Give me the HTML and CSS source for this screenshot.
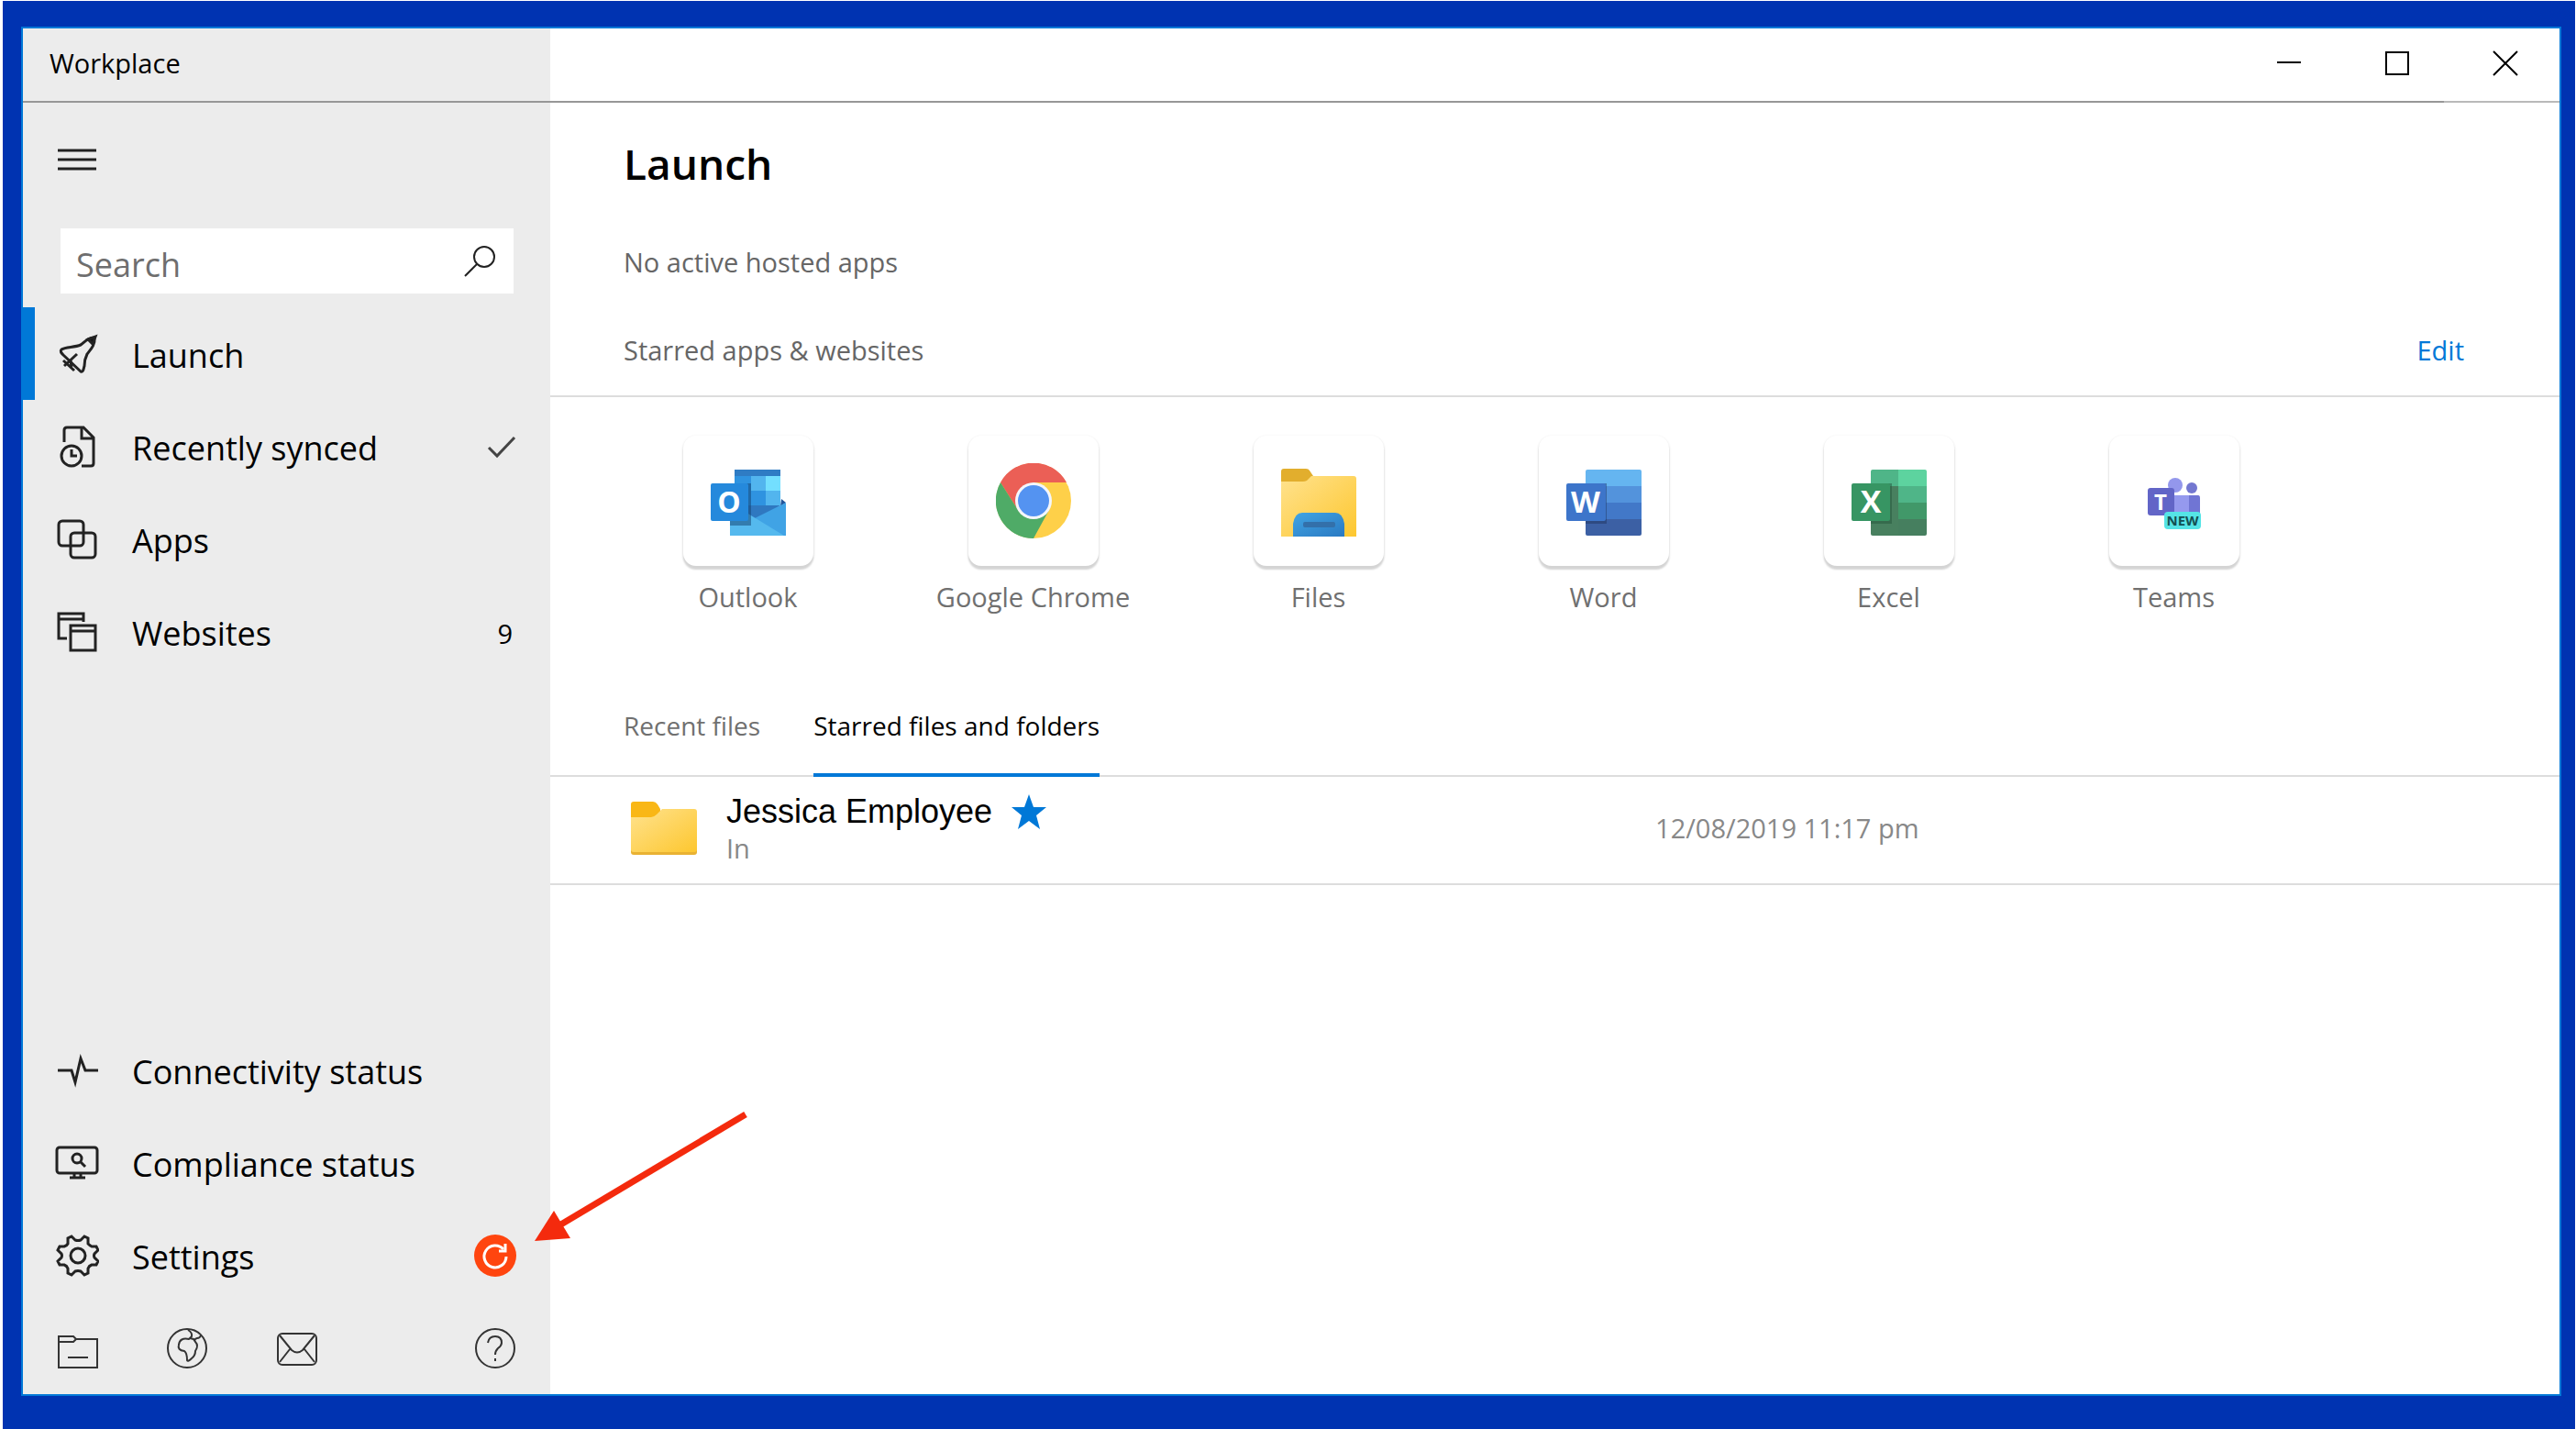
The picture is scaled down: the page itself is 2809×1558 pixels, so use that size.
FILE: index.html
```
<!DOCTYPE html>
<html lang="en">
<head>
  <meta charset="UTF-8" />
  <meta name="viewport" content="width=device-width, initial-scale=1" />
  <title>Workplace</title>
  <link rel="stylesheet" href="styles.css">
</head>
<body>

<div class="desktop">
<div class="window">

  <header class="titlebar">
    <div class="app-name">Workplace</div>
    <div class="window-controls">
      <button type="button" aria-label="Minimize">
        <svg width="28" height="28" viewBox="0 0 28 28"><path d="M1 13h26" /></svg>
      </button>
      <button type="button" aria-label="Maximize">
        <svg width="28" height="28" viewBox="0 0 28 28"><rect x="2" y="2" width="24" height="24" /></svg>
      </button>
      <button type="button" aria-label="Close">
        <svg width="28" height="28" viewBox="0 0 28 28"><path d="M1 1l26 26M27 1L1 27" /></svg>
      </button>
    </div>
  </header>
  <div class="titlebar-line"></div>

  <div class="content">

    <!-- Sidebar -->
    <aside class="sidebar">
      <button type="button" class="hamburger" aria-label="Menu">
        <svg class="icon" viewBox="0 0 48 48"><path d="M3 14h42M3 24h42M3 34h42" /></svg>
      </button>

      <form class="search">
        <input type="search" placeholder="Search" aria-label="Search">
        <button type="submit" aria-label="Start search">
          <svg width="36" height="36" viewBox="0 0 36 36"><circle cx="23" cy="13" r="11" /><path d="M15 21L2 34" /></svg>
        </button>
      </form>

      <nav>
        <ul>
          <li>
            <a href="#launch" class="nav-item active" aria-current="page">
              <svg class="icon" viewBox="0 0 48 48">
                <path d="M43 6C36 6 33 10 28 14C21 17 12 16 7 19C5 21 7 23 9 25L28 43C31 44 31 40 32 37C32 32 33 28 35 24C39 19 44 14 43 6Z" />
                <path d="M24 24L10 37M9 31L21 42M17 31L18 38" />
                <path d="M36 8L41 13L44 5Z" fill="#111" />
              </svg>
              <span>Launch</span>
            </a>
          </li>
          <li>
            <a href="#recent" class="nav-item">
              <svg class="icon" viewBox="0 0 48 48">
                <path d="M10 19V6Q10 3 13 3H31L42 14V42Q42 45 39 45H29M29 3V15H42" />
                <circle cx="18" cy="34" r="11" />
                <path d="M18 27V34H24" />
              </svg>
              <span>Recently synced</span>
              <svg class="check" width="32" height="32" viewBox="0 0 32 32"><path d="M2 17L11 26L30 6" /></svg>
            </a>
          </li>
          <li>
            <a href="#apps" class="nav-item">
              <svg class="icon" viewBox="0 0 48 48">
                <rect x="4" y="4" width="27" height="27" rx="4" />
                <rect x="17" y="17" width="27" height="27" rx="4" />
              </svg>
              <span>Apps</span>
            </a>
          </li>
          <li>
            <a href="#websites" class="nav-item">
              <svg class="icon" viewBox="0 0 48 48">
                <path d="M31 13V4H4V31H13M4 10H31M17 17H44V44H17ZM17 23H44" />
              </svg>
              <span>Websites</span>
              <span class="count">9</span>
            </a>
          </li>
        </ul>
      </nav>

      <div class="sidebar-bottom">
        <ul>
          <li>
            <a href="#connectivity" class="nav-item">
              <svg class="icon" viewBox="0 0 48 48">
                <path d="M3 24H18L22 37L28 11L33 24H47" />
              </svg>
              <span>Connectivity status</span>
            </a>
          </li>
          <li>
            <a href="#compliance" class="nav-item">
              <svg class="icon" viewBox="0 0 48 48">
                <rect x="2" y="7" width="44" height="28" rx="3" />
                <path d="M21 35V40M28 35V40M16 40H33" />
                <circle cx="24" cy="19" r="5" /><path d="M28 23L33 28" />
              </svg>
              <span>Compliance status</span>
            </a>
          </li>
          <li class="settings">
            <a href="#settings" class="nav-item">
              <svg class="icon" viewBox="0 0 48 48">
                <path d="M18 3L22 7Q25 8 28 7L32 3L36 5V11Q38 13 40 14H45L47 18L43 22Q42 24 43 26L47 30L45 34H40Q37 35 36 38V43L32 45L28 41Q25 40 22 41L18 45L14 43V38Q13 35 10 34H5L3 30L7 26Q8 24 7 22L3 18L5 14H10Q13 13 14 11V5Z" />
                <circle cx="25" cy="24" r="8" />
              </svg>
              <span>Settings</span>
              <svg class="badge" width="46" height="46" viewBox="0 0 46 46">
                <circle cx="23" cy="23" r="23" fill="#ff450f" />
                <path d="M35 24A12 12 0 1 1 32 16" />
                <path d="M34 10V18H27" />
              </svg>
            </a>
            <!-- red arrow pointing at the update badge -->
            <svg class="arrow" width="236" height="146" viewBox="0 0 236 146">
              <path d="M28 126L231 5" stroke="#f42a0d" stroke-width="7" />
              <path d="M1 143L22 110L40 140Z" fill="#f42a0d" />
            </svg>
          </li>
        </ul>

        <div class="quick-links">
          <a href="#folder" aria-label="Folder">
            <svg class="icon" viewBox="0 0 48 48"><path d="M4 12V45H46V14H23L20 11H4ZM4 17H20L23 14M14 34H36" /></svg>
          </a>
          <a href="#web" aria-label="Web">
            <svg class="icon" viewBox="0 0 48 48">
              <circle cx="24" cy="24" r="21" />
              <path d="M25 4Q30 7 29 11L26 14Q16 12 15 20Q13 26 21 27Q24 29 24 37Q25 39 29 35Q33 32 33 27Q37 21 33 17Q31 14 35 13Q38 13 39 10M33 17L31 14L27 13" />
            </svg>
          </a>
          <a href="#mail" aria-label="Mail">
            <svg class="icon" viewBox="0 0 48 48">
              <rect x="3" y="8" width="42" height="34" rx="5" />
              <path d="M5 10L18 26Q24 31 30 26L43 10M5 39L16 25M43 39L32 25" />
            </svg>
          </a>
          <a href="#help" class="help" aria-label="Help">
            <svg class="icon" viewBox="0 0 48 48">
              <circle cx="24" cy="24" r="21" />
              <path d="M16 18Q17 11 24 11Q31 11 31 18Q31 21 27 24Q24 27 24 31M24 35V38" />
            </svg>
          </a>
        </div>
      </div>
    </aside>

    <!-- Main area -->
    <main>
      <h1>Launch</h1>
      <p class="hosted">No active hosted apps</p>

      <div class="section-head">
        <h2>Starred apps &amp; websites</h2>
        <button type="button" class="edit">Edit</button>
      </div>

      <div class="apps">
        <a href="#outlook" class="app">
          <span class="tile">
            <svg width="82" height="82" viewBox="0 0 82 82">
              <path fill="#2f7cc4" d="M26 7H76V46H26Z" />
              <path fill="#2f93e0" d="M26 14H44V46H26ZM44 30H60V46H44Z" />
              <path fill="#52b5ee" d="M44 14H60V30H44ZM60 30H76V46H60Z" />
              <path fill="#73dfff" d="M60 14H76V30H60Z" />
              <path fill="#2f78c0" d="M26 46H76L51 64Z" />
              <path fill="#22569b" d="M77 39L82 43L76 47Z" />
              <path fill="#40a3e5" d="M82 43V79H40V64Z" />
              <path fill="#55b9ee" d="M21 43L80 79H21Z" />
              <path fill="#12406e" opacity=".5" d="M21 22H44V68H21Z" />
              <rect y="22" width="41" height="41" rx="2" fill="#2589dc" />
              <text x="20" y="54" font-size="32">O</text>
            </svg>
          </span>
          <span>Outlook</span>
        </a>
        <a href="#chrome" class="app">
          <span class="tile">
            <svg width="82" height="82" viewBox="0 0 82 82">
              <circle cx="41" cy="41" r="41" fill="#fed049" />
              <path fill="#eb5f56" d="M5 21A41 41 0 0 1 77 21H41V41L24 51Z" />
              <path fill="#4fab67" d="M5 21L24 51A20 20 0 0 0 58 51L41 82A41 41 0 0 1 5 21Z" />
              <circle cx="41" cy="41" r="20" fill="#f4f6fb" />
              <circle cx="41" cy="41" r="17" fill="#5493f1" />
            </svg>
          </span>
          <span>Google Chrome</span>
        </a>
        <a href="#files" class="app">
          <span class="tile">
            <svg width="82" height="82" viewBox="0 0 82 82">
              <defs>
                <linearGradient id="folder" x2="1" y2="1">
                  <stop offset="0" stop-color="#ffe28e" />
                  <stop offset="1" stop-color="#fdc72f" />
                </linearGradient>
                <linearGradient id="tray" x2="1" y2="1">
                  <stop offset="0" stop-color="#41a5e4" />
                  <stop offset="1" stop-color="#2a79c2" />
                </linearGradient>
              </defs>
              <path fill="#e2ae2d" d="M0 9Q0 6 3 6H27Q30 6 31 8L35 14V21H0Z" />
              <path fill="url(#folder)" d="M0 20H24Q28 20 30 17L33 14H79Q82 14 82 17V80H0Z" />
              <path fill="url(#tray)" d="M13 80V66Q15 54 23 54H59Q67 54 69 66V80Z" />
              <rect x="24" y="64" width="35" height="6" rx="2" fill="#3370aa" />
            </svg>
          </span>
          <span>Files</span>
        </a>
        <a href="#word" class="app">
          <span class="tile">
            <svg width="82" height="82" viewBox="0 0 82 82">
              <path fill="#65b5f0" d="M21 9Q21 7 23 7H80Q82 7 82 9V25H21Z" />
              <path fill="#5393dc" d="M21 25H82V43H21Z" />
              <path fill="#4278c8" d="M21 43H82V61H21Z" />
              <path fill="#3c60a4" d="M21 61H82V77Q82 79 80 79H23Q21 79 21 77Z" />
              <path fill="#1d3157" opacity=".45" d="M21 22H44V66H21Z" />
              <rect y="22" width="43" height="41" rx="2" fill="#3d75ca" />
              <text x="21" y="54" font-size="33">W</text>
            </svg>
          </span>
          <span>Word</span>
        </a>
        <a href="#excel" class="app">
          <span class="tile">
            <svg width="82" height="82" viewBox="0 0 82 82">
              <path fill="#4fb588" d="M21 9Q21 7 23 7H51V25H82V43H21Z" />
              <path fill="#5dd39f" d="M51 7H80Q82 7 82 9V25H51Z" />
              <path fill="#48805f" d="M21 25H51V79H23Q21 79 21 77Z" />
              <path fill="#419869" d="M51 43H82V61H51Z" />
              <path fill="#467f5f" d="M51 61H82V77Q82 79 80 79H51Z" />
              <path fill="#24553c" opacity=".5" d="M21 22H44V66H21Z" />
              <rect y="22" width="42" height="41" rx="2" fill="#379563" />
              <text x="21" y="54" font-size="34">X</text>
            </svg>
          </span>
          <span>Excel</span>
        </a>
        <a href="#teams" class="app">
          <span class="tile">
            <svg width="82" height="82" viewBox="0 0 82 82">
              <circle cx="42" cy="24" r="8" fill="#9397ec" />
              <circle cx="60" cy="27" r="6" fill="#7377d0" />
              <path fill="#7075d4" d="M55 35H67Q69 35 69 38V54H55Z" />
              <path fill="#9599ee" d="M38 35H57V56H38Z" />
              <rect x="12" y="27" width="29" height="30" rx="3" fill="#6265c7" />
              <text x="26" y="51" font-size="24">T</text>
              <rect x="30" y="53" width="40" height="19" rx="4" fill="#55e4e6" />
              <text x="50" y="68" font-size="15" class="new">NEW</text>
            </svg>
          </span>
          <span>Teams</span>
        </a>
      </div>

      <div class="tabs" role="tablist">
        <button type="button" role="tab" aria-selected="false">Recent files</button>
        <button type="button" role="tab" aria-selected="true" class="selected">Starred files and folders</button>
      </div>

      <ul class="files">
        <li>
          <div class="file">
            <svg width="72" height="60" viewBox="0 0 72 60">
              <path fill="#f9b716" d="M0 4Q0 1 3 1H24Q27 1 29 4L32 9V20H0Z" />
              <path fill="#e9b233" d="M0 20H72V56Q72 59 69 59H3Q0 59 0 56Z" />
              <path fill="url(#folder)" d="M0 18H22Q25 18 28 15L34 9H69Q72 9 72 12V53Q72 56 69 56H3Q0 56 0 53Z" />
            </svg>
            <div>
              <div class="file-name">
                <a href="#jessica">Jessica Employee</a>
                <svg width="40" height="40" viewBox="0 0 40 40"><path fill="#0078d7" d="M20 1L25 15H39L28 24L32 39L20 30L8 39L12 24L1 15H15Z" /></svg>
              </div>
              <div class="file-location">In</div>
            </div>
          </div>
          <time datetime="2019-12-08T23:17">12/08/2019 11:17 pm</time>
        </li>
      </ul>
    </main>
  </div>

</div>
</div>

</body>
</html>
```
FILE: styles.css
```
* {
  box-sizing: border-box;
}
body {
  margin: 0;
  padding: 1px 1px 0 3px;
  background: #fff;
  color: #000;
  font-family: "Open Sans", "Noto Sans", sans-serif;
  font-size: 29px;
  line-height: 40px;
}
a {
  color: inherit;
  text-decoration: none;
}
button {
  border: 0;
  padding: 0;
  background: none;
  color: inherit;
  font: inherit;
  cursor: pointer;
}
ul {
  list-style: none;
  margin: 0;
  padding: 0;
}
svg {
  display: block;
  flex-shrink: 0;
}

.desktop {
  display: flex;
  min-height: calc(100vh - 1px);
  padding: 28px 15px 36px 20px;
  background: #0033b1;
}
.window {
  flex: 1;
  display: flex;
  flex-direction: column;
  border: 2px solid #0078d7;
  background: #fff;
}

/* Title bar */
.titlebar {
  display: flex;
  justify-content: space-between;
}
.app-name {
  width: 575px;
  padding: 18px 29px 21px;
  background: #ececec;
}
.titlebar-line {
  height: 2px;
  background: linear-gradient(to left, #b9b9b9 126px, #979797 126px);
}
.window-controls {
  display: flex;
  padding-bottom: 3px;
}
.window-controls button {
  display: flex;
  align-items: center;
  justify-content: center;
  width: 118px;
}
.window-controls svg {
  fill: none;
  stroke: #000;
  stroke-width: 2;
}

.content {
  flex: 1;
  display: flex;
}

/* Sidebar */
.sidebar {
  display: flex;
  flex-direction: column;
  width: 575px;
  flex-shrink: 0;
  background: #ececec;
}
.icon {
  width: 48px;
  height: 48px;
  fill: none;
  stroke: #222;
  stroke-width: 3;
}
.hamburger {
  align-self: flex-start;
  margin: 38px 35px 51px;
}
.search {
  display: flex;
  margin: 0 40px 15px 41px;
  background: #fff;
}
.search input {
  flex: 1;
  min-width: 0;
  height: 71px;
  border: 0;
  padding: 8px 0 0 17px;
  background: none;
  font-family: inherit;
  font-size: 36px;
}
.search input::placeholder {
  color: #6e6e6e;
}
.search button {
  padding: 0 19px;
}
.search svg {
  fill: none;
  stroke: #222;
  stroke-width: 2;
}
.nav-item {
  display: flex;
  align-items: center;
  gap: 36px;
  height: 101px;
  padding: 0 37px 0 35px;
  font-size: 36px;
}
.nav-item span {
  padding-top: 4px;
}
.nav-item.active {
  padding-left: 22px;
  border-left: 13px solid #0078d7;
}
.check {
  margin-left: auto;
  fill: none;
  stroke: #444;
  stroke-width: 3;
}
.nav-item .count {
  margin-left: auto;
  padding-right: 4px;
  font-size: 29px;
}
.badge {
  margin-left: auto;
}
.badge path {
  fill: none;
  stroke: #fff;
  stroke-width: 3;
}
.sidebar-bottom {
  margin-top: auto;
}
.settings {
  position: relative;
}
.arrow {
  position: absolute;
  left: 557px;
  top: -108px;
  pointer-events: none;
}
.quick-links {
  display: flex;
  align-items: center;
  height: 101px;
  padding: 0 36px 0 35px;
  gap: 72px;
}
.quick-links .icon {
  stroke: #333;
  stroke-width: 2;
}
.quick-links .help {
  margin-left: auto;
}

/* Main */
main {
  flex: 1;
  min-width: 0;
  padding-top: 34px;
}
h1 {
  margin: 0 80px 56px;
  font-size: 46px;
  line-height: 64px;
  font-weight: 600;
}
.hosted {
  margin: 0 80px 56px;
  color: #666;
}
.section-head {
  display: flex;
  justify-content: space-between;
  padding: 0 104px 29px 80px;
  border-bottom: 2px solid #ddd;
}
.section-head h2 {
  margin: 0;
  font-size: 29px;
  font-weight: 400;
  color: #666;
}
.edit {
  color: #0078d7;
}

.apps {
  display: grid;
  grid-template-columns: repeat(auto-fill, 311px);
  padding: 42px 60px 100px;
}
.app {
  display: flex;
  flex-direction: column;
  align-items: center;
  gap: 14px;
  color: #707070;
}
.tile {
  display: flex;
  align-items: center;
  justify-content: center;
  width: 142px;
  height: 142px;
  border-radius: 14px;
  background: #fff;
  box-shadow: 0 4px 2px #d4d4d4, 0 1px 3px #ddd;
}
.tile text {
  fill: #fff;
  font-family: "Open Sans", sans-serif;
  font-weight: 700;
  text-anchor: middle;
}
.tile .new {
  fill: #134f53;
}

.tabs {
  display: flex;
  gap: 58px;
  padding: 0 80px;
  border-bottom: 2px solid #ddd;
}
.tabs button {
  margin-bottom: -2px;
  padding-bottom: 32px;
  border-bottom: 4px solid transparent;
  font-size: 28px;
  color: #707070;
}
.tabs .selected {
  border-color: #0078d7;
  color: #000;
}

.files li {
  display: grid;
  grid-template-columns: 11fr 9fr;
  align-items: center;
  padding: 16px 0 20px;
  border-bottom: 2px solid #ddd;
}
.file {
  display: flex;
  align-items: center;
  gap: 32px;
  padding-left: 88px;
}
.file-name {
  display: flex;
  align-items: center;
  gap: 20px;
  font-family: "Liberation Sans", Arial, sans-serif;
  font-size: 36px;
  line-height: 44px;
}
.file-location {
  line-height: 36px;
  color: #888;
}
.files time {
  color: #888;
}
```
